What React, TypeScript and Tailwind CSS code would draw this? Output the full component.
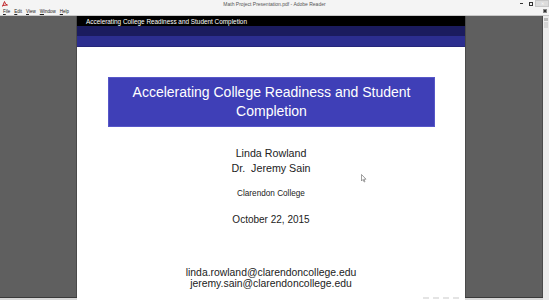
import React from "react";

export default function App() {
  const sans = { fontFamily: '"Liberation Sans", Arial, sans-serif' };
  return (
    <div className="antialiased w-[549px] h-[300px] overflow-hidden flex flex-col bg-[#f0f0f0]" style={sans}>
      {/* Title bar */}
      <div className="relative h-[8px] bg-[#f4f4f4] flex items-center justify-center">
        <svg className="absolute left-[2px] top-[1px]" width="6" height="6" viewBox="0 0 6 6">
          <path d="M0.5 5.5 L2.5 0.5 L3.5 3 L5.5 4 L0.5 4.5" fill="none" stroke="#c0282d" strokeWidth="1" />
        </svg>
        <span className="text-[5px] leading-[5px] text-[#555]">Math Project Presentation.pdf - Adobe Reader</span>
        <div className="absolute right-0 top-0 flex items-start h-[8px]">
          <div className="w-[9px] h-[7px] flex items-center justify-center">
            <div className="w-[3px] h-[1px] bg-[#333]" />
          </div>
          <div className="w-[9px] h-[7px] flex items-center justify-center">
            <div className="w-[4px] h-[4px] border border-[#333]" />
          </div>
          <div className="w-[14px] h-[7px] bg-[#dcdcdc] border border-[#c8c8c8] flex items-center justify-center">
            <span className="text-[4px] leading-[4px] text-white">✕</span>
          </div>
        </div>
      </div>
      {/* Menu bar */}
      <div className="relative h-[7px] bg-[#f4f4f4] flex items-center pl-[3px] gap-[4px] text-[4.5px] leading-[5px] text-[#222]">
        <span><u>F</u>ile</span>
        <span><u>E</u>dit</span>
        <span><u>V</u>iew</span>
        <span><u>W</u>indow</span>
        <span><u>H</u>elp</span>
        <div className="absolute right-[2px] top-[1px] w-[4px] h-[4px] bg-[#333] border border-[#888]" />
      </div>
      <div className="h-[1px] bg-[#c9c9c9]" />
      {/* Content */}
      <div className="flex flex-1 min-h-0">
        <div className="w-[77px] flex flex-col">
          <div className="flex-1 bg-[#5f5f5f] border-r border-[#4a4a4a]" />
          <div className="h-[1px] bg-[#3a3a3a]" />
          <div className="h-[2px] bg-[#d8d8d8]" />
        </div>
        {/* Page */}
        <div className="w-[388px] bg-white flex flex-col relative">
          <div className="h-[10px] bg-black flex items-center pl-[9px]">
            <span className="text-white text-[6.4px] leading-[7px]">Accelerating College Readiness and Student Completion</span>
          </div>
          <div className="h-[10px] bg-[#1b1c5e]" />
          <div className="h-[11px] bg-[#2c2e8f] border-b border-[#25267a]" />
          <div className="flex flex-col items-center text-[#222]">
            <div className="mt-[30px] ml-[1px] w-[327px] h-[50px] bg-[#3f3fb7] border border-[#5757c8] flex flex-col items-center justify-center text-white text-[14px] leading-[19px]">
              <span>Accelerating College Readiness and Student</span>
              <span>Completion</span>
            </div>
            <div className="mt-[19px] flex flex-col items-center text-[10.7px] leading-[14.5px]">
              <span>Linda Rowland</span>
              <span>Dr.&nbsp; Jeremy Sain</span>
            </div>
            <div className="mt-[14px] text-[8.2px] leading-[10px] text-[#222]">Clarendon College</div>
            <div className="mt-[15px] text-[10px] leading-[12px]">October 22, 2015</div>
            <div className="mt-[41px] flex flex-col items-center text-[10.4px] leading-[11px]">
              <span>linda.rowland@clarendoncollege.edu</span>
              <span>jeremy.sain@clarendoncollege.edu</span>
            </div>
          </div>
          <div className="absolute right-[6px] bottom-[1px] flex gap-[4px]">
            <div className="w-[6px] h-[2px] bg-[#e4e4e4]" />
            <div className="w-[6px] h-[2px] bg-[#e4e4e4]" />
            <div className="w-[6px] h-[2px] bg-[#e4e4e4]" />
            <div className="w-[6px] h-[2px] bg-[#e4e4e4]" />
          </div>
          <svg className="absolute left-[284px] top-[158px]" width="6" height="9" viewBox="0 0 6 9">
            <path d="M0.5 0.5 L0.5 7 L2 5.5 L3.2 8 L4 7.6 L2.9 5.2 L5 5.2 Z" fill="white" stroke="#777" strokeWidth="0.7" />
          </svg>
        </div>
        <div className="w-[78px] flex flex-col">
          <div className="flex-1 bg-[#5f5f5f] border-l border-[#4a4a4a] border-r border-r-[#4a4a4a]" />
          <div className="h-[1px] bg-[#3a3a3a]" />
          <div className="h-[2px] bg-[#d8d8d8]" />
        </div>
        {/* Scrollbar */}
        <div className="w-[6px] bg-[#ececec] flex flex-col items-center">
          <div className="mt-[2px] w-[4px] h-[3px] bg-[#bbb]" />
          <div className="mt-[1px] w-[4px] h-[6px] bg-[#d6d6d6]" />
        </div>
      </div>
    </div>
  );
}
